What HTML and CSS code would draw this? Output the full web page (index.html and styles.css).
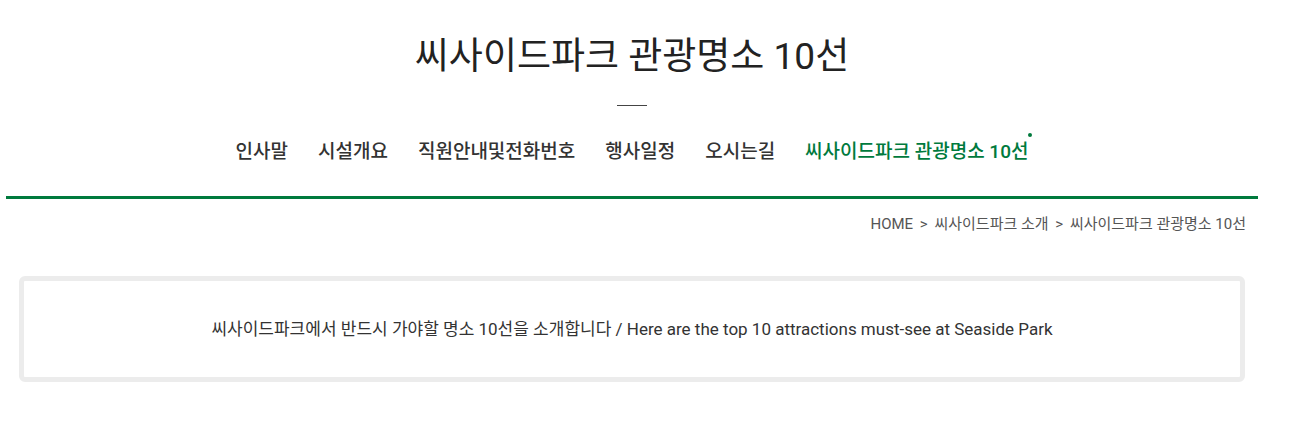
FILE: index.html
```html
<!DOCTYPE html>
<html lang="ko">
  <head>
    <meta charset="UTF-8" />
    <meta name="viewport" content="width=device-width, initial-scale=1.0" />
    <title>씨사이드파크 관광명소 10선</title>
    <link rel="stylesheet" href="styles.css">
  </head>
  <body>
    <div class="wrap">
      <!-- Page Title -->
      <div class="page-head">
        <h1>씨사이드파크 관광명소 10선</h1>
        <div class="title-bar"></div>
        <ul class="sub-nav">
          <li><a href="#">인사말</a></li>
          <li><a href="#">시설개요</a></li>
          <li><a href="#">직원안내및전화번호</a></li>
          <li><a href="#">행사일정</a></li>
          <li><a href="#">오시는길</a></li>
          <li><a href="#" class="active">씨사이드파크 관광명소 10선</a></li>
        </ul>
      </div>

      <!-- Breadcrumb -->
      <div class="location">
        <span>HOME</span>
        <span class="sep">&gt;</span>
        <span>씨사이드파크 소개</span>
        <span class="sep">&gt;</span>
        <span>씨사이드파크 관광명소 10선</span>
      </div>

      <!-- Intro Box -->
      <div class="intro-box">
        <p>씨사이드파크에서 반드시 가야할 명소 10선을 소개합니다 / Here are the top 10 attractions must-see at Seaside Park</p>
      </div>
    </div>
  </body>
</html>
```

FILE: styles.css
```css
body {
  margin: 0;
  font-family: "Roboto", "Noto Sans CJK KR", sans-serif;
  color: #333;
  background: #fff;
}
.wrap {
  width: 1252px;
  margin-left: 6px;
}
.page-head {
  text-align: center;
  border-bottom: 3px solid #007a3d;
  padding-bottom: 32px;
}
.page-head h1 {
  margin: 0;
  padding-top: 32px;
  font-size: 37px;
  line-height: 50px;
  font-weight: 400;
  color: #222;
}
.title-bar {
  width: 30px;
  height: 1px;
  background: #444;
  margin: 23px auto 0;
}
.sub-nav {
  list-style: none;
  margin: 34px 0 0;
  padding: 0;
  display: flex;
  justify-content: center;
}
.sub-nav li {
  padding: 0 15px;
}
.sub-nav a {
  position: relative;
  display: block;
  font-size: 19px;
  line-height: 24px;
  font-weight: 500;
  color: #333;
  text-decoration: none;
}
.sub-nav a.active {
  color: #007a3d;
}
.sub-nav a.active::after {
  content: "";
  position: absolute;
  right: -4px;
  top: -7px;
  width: 4px;
  height: 4px;
  border-radius: 50%;
  background: #007a3d;
}
.location {
  margin-top: 15px;
  padding-right: 12px;
  text-align: right;
  font-size: 15px;
  line-height: 20px;
  color: #555;
}
.location .sep {
  margin: 0 3px;
}
.intro-box {
  margin: 42px 13px 0;
  border: 5px solid #ececec;
  border-radius: 6px;
  padding: 36px 0;
  text-align: center;
}
.intro-box p {
  margin: 0;
  font-size: 17px;
  line-height: 24px;
  color: #333;
}
```
